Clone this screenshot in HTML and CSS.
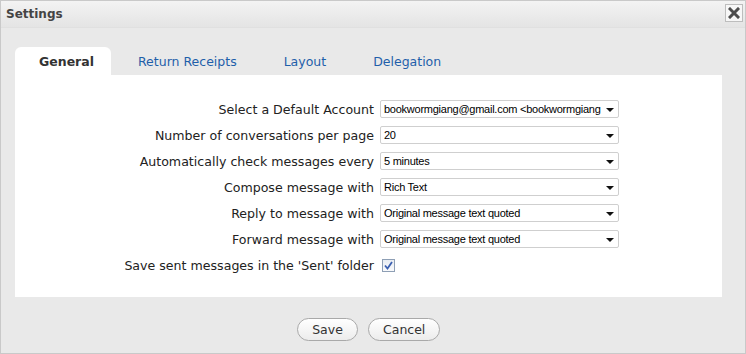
FILE: index.html
```html
<!DOCTYPE html>
<html>
<head>
<meta charset="utf-8">
<title>Settings</title>
<link rel="stylesheet" href="styles.css">
</head>
<body>
<div class="window">
  <div class="titlebar">
    <span class="title">Settings</span>
    <span class="close">
      <svg width="12" height="12" viewBox="0 0 12 12"><path d="M2 2 L10 10 M10 2 L2 10" stroke="#4d4d4d" stroke-width="3" stroke-linecap="square"/></svg>
    </span>
  </div>
  <div class="content">
    <div class="tabs">
      <span class="tab active">General</span>
      <span class="tab">Return Receipts</span>
      <span class="tab">Layout</span>
      <span class="tab">Delegation</span>
    </div>
    <div class="panel">
      <div class="row"><label class="lbl">Select a Default Account</label><div class="sel"><span class="val">bookwormgiang@gmail.com &lt;bookwormgiang</span><span class="arrow"></span></div></div>
      <div class="row"><label class="lbl">Number of conversations per page</label><div class="sel"><span class="val">20</span><span class="arrow"></span></div></div>
      <div class="row"><label class="lbl">Automatically check messages every</label><div class="sel"><span class="val">5 minutes</span><span class="arrow"></span></div></div>
      <div class="row"><label class="lbl">Compose message with</label><div class="sel"><span class="val">Rich Text</span><span class="arrow"></span></div></div>
      <div class="row"><label class="lbl">Reply to message with</label><div class="sel"><span class="val">Original message text quoted</span><span class="arrow"></span></div></div>
      <div class="row"><label class="lbl">Forward message with</label><div class="sel"><span class="val">Original message text quoted</span><span class="arrow"></span></div></div>
      <div class="row"><label class="lbl">Save sent messages in the 'Sent' folder</label><span class="check"><svg width="9" height="9" viewBox="0 0 9 9"><path d="M1 4.5 L3.5 7.5 L8 1" fill="none" stroke="#3b5fb0" stroke-width="1.8"/></svg></span></div>
    </div>
    <div class="footer">
      <button class="btn">Save</button>
      <button class="btn">Cancel</button>
    </div>
  </div>
</div>
</body>
</html>
```
FILE: styles.css
```css
html, body { margin: 0; padding: 0; }
body { width: 746px; height: 354px; overflow: hidden; font-family: "DejaVu Sans", Verdana, sans-serif; }
.window {
  width: 746px; height: 354px; box-sizing: border-box;
  border: 1px solid #c9c9c9;
  background: #e9e9e9;
  display: flex; flex-direction: column;
}
.titlebar {
  height: 27px; box-sizing: border-box;
  background: linear-gradient(#f3f3f3, #e4e4e4);
  border-bottom: 1px solid #e0e0e0;
  display: flex; align-items: center; justify-content: space-between;
  padding: 0 2px 0 5px;
}
.title { font-size: 12px; font-weight: bold; color: #444; }
.close {
  width: 16px; height: 16px; border: 1px solid #bdbdbd; background: #f7f7f7;
  display: flex; align-items: center; justify-content: center; margin-top: -2px;
}
.content { padding: 0 23px 0 14px; flex: 1; display: flex; flex-direction: column; }
.tabs { display: flex; margin-top: 19px; height: 28px; }
.tab {
  font-size: 12.5px; color: #1f5faa; line-height: 29px;
  padding: 0 20px 0 27px; border-radius: 6px 6px 0 0;
}
.tab.active { background: #fff; color: #333; font-weight: bold; padding: 0 17px 0 24px; }
.panel { background: #fff; padding: 21px 0 19px; }
.row { display: flex; align-items: center; height: 26px; }
.lbl { width: 359px; text-align: right; font-size: 12.6px; color: #222; padding-right: 6px; white-space: nowrap; }
.sel {
  width: 239px; height: 18px; box-sizing: border-box;
  border: 1px solid #cfcfcf; border-radius: 2px; background: #fff;
  display: flex; align-items: center; gap: 4px;
  padding: 0 4px 0 3px;
  font-family: "Liberation Sans", Arial, sans-serif; font-size: 11px; letter-spacing: -0.25px; color: #000;
}
.val { flex: 1; white-space: nowrap; }
.arrow { flex: none; width: 0; height: 0; border-left: 4px solid transparent; border-right: 4px solid transparent; border-top: 4px solid #111; margin-top: 2px; }
.check {
  width: 11px; height: 11px; margin-left: 2px; border: 1px solid #8e9fb5; background: linear-gradient(#e8ecf2, #f9fafc);
  display: flex; align-items: center; justify-content: center;
}
.footer { display: flex; justify-content: center; gap: 10px; padding-top: 21px; }
.btn {
  height: 23px; padding: 0 14px; border: 1px solid #a9a9a9; border-radius: 12px;
  background: linear-gradient(#ffffff, #ececec); color: #333;
  font-family: "DejaVu Sans", Verdana, sans-serif; font-size: 12.5px;
}
.btn:first-child { width: 61px; }
.btn:last-child { width: 72px; }
```
